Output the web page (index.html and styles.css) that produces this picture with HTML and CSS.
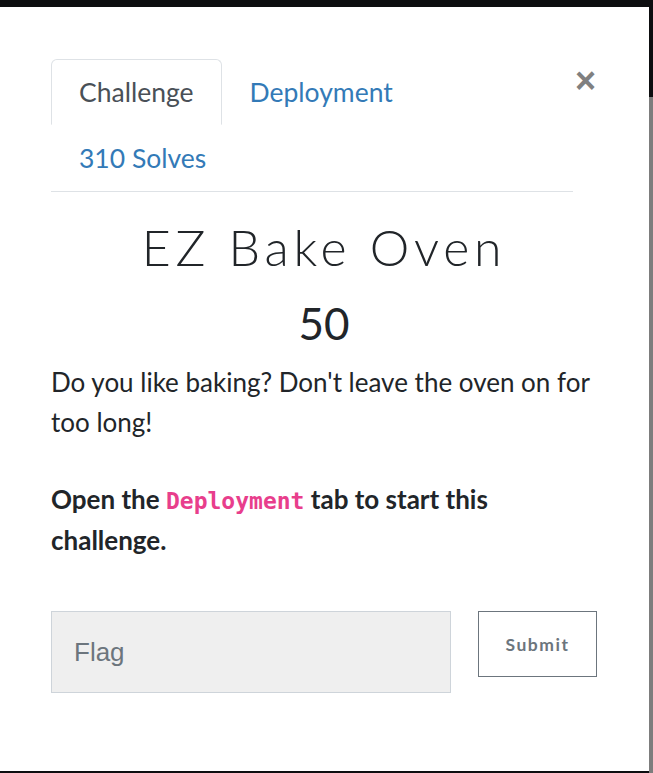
FILE: index.html
```html
<!DOCTYPE html>
<html>
<head>
<meta charset="utf-8">
<link rel="stylesheet" href="styles.css">
</head>
<body>
<div class="screen">
  <div class="modal">
    <div class="header">
      <ul class="tabs">
        <li class="tab active">Challenge</li>
        <li class="tab">Deployment</li>
        <li class="tab">310 Solves</li>
      </ul>
      <span class="close">&times;</span>
    </div>
    <h2 class="title">EZ Bake Oven</h2>
    <h3 class="value">50</h3>
    <div class="desc">
      <p>Do you like baking? Don't leave the oven on for too long!</p>
      <p class="strong">Open the <code>Deployment</code> tab to start this challenge.</p>
    </div>
    <form class="flag-row">
      <div class="flag-input">Flag</div>
      <button type="button" class="submit">Submit</button>
    </form>
  </div>
  <div class="backdrop"></div>
</div>
</body>
</html>
```
FILE: styles.css
```css
* { box-sizing: border-box; }
html, body { margin: 0; padding: 0; }
body {
  background: #0d0e10;
  width: 653px;
  height: 773px;
  overflow: hidden;
  font-family: Lato, "Open Sans", sans-serif;
  color: #212529;
}
.screen {
  display: flex;
  height: 773px;
}
.modal {
  width: 649px;
  height: 764px;
  margin-top: 7px;
  background: #fff;
  padding: 52px 52px 0 51px;
}
.backdrop {
  width: 4px;
  margin-top: 97px;
  background: #7d7d7d;
  height: 676px;
}
.header {
  display: flex;
  align-items: flex-start;
}
.tabs {
  list-style: none;
  margin: 0;
  padding: 0;
  width: 522px;
  display: flex;
  flex-wrap: wrap;
  border-bottom: 1px solid #dee2e6;
}
.tab {
  font-size: 26.5px;
  line-height: 36px;
  padding: 14px 27px;
  color: #337ab7;
  border: 1px solid transparent;
  border-top-left-radius: 6px;
  border-top-right-radius: 6px;
}
.tab.active {
  color: #495057;
  border-color: #dee2e6 #dee2e6 #fff;
}
.close {
  margin-left: auto;
  margin-right: 1px;
  margin-top: -4px;
  font-family: "Liberation Sans", Arial, sans-serif;
  font-weight: 700;
  font-size: 36px;
  line-height: 52px;
  color: #808080;
}
.title {
  margin: 25px 0 0;
  text-align: center;
  font-family: Lato, sans-serif;
  font-weight: 300;
  font-size: 50px;
  letter-spacing: 4.8px;
  line-height: 60px;
  color: #212529;
}
.value {
  margin: 22px 0 0;
  text-align: center;
  font-weight: 400;
  font-size: 44px;
  line-height: 48px;
}
.desc {
  margin-top: 15px;
  font-size: 26px;
  line-height: 40px;
}
.desc p { margin: 0 0 37px; }
.desc .strong { font-weight: 700; margin-bottom: 0; line-height: 41px; }
code {
  font-family: "DejaVu Sans Mono", monospace;
  font-size: 23px;
  line-height: 1;
  color: #e83e8c;
  font-weight: 700;
}
.flag-row {
  display: flex;
  margin-top: 50px;
  gap: 27px;
  align-items: flex-start;
}
.flag-input {
  width: 400px;
  height: 82px;
  background: #efefef;
  border: 1px solid #ced4da;
  padding: 0 22px;
  font-family: "Liberation Sans", Arial, sans-serif;
  font-size: 26px;
  line-height: 80px;
  color: #6c757d;
}
.submit {
  width: 119px;
  height: 66px;
  background: #fff;
  border: 1px solid #6c757d;
  border-radius: 0;
  font-family: Lato, sans-serif;
  font-weight: 700;
  font-size: 17.5px;
  letter-spacing: 1.5px;
  color: #6c757d;
  padding: 0;
}
```
